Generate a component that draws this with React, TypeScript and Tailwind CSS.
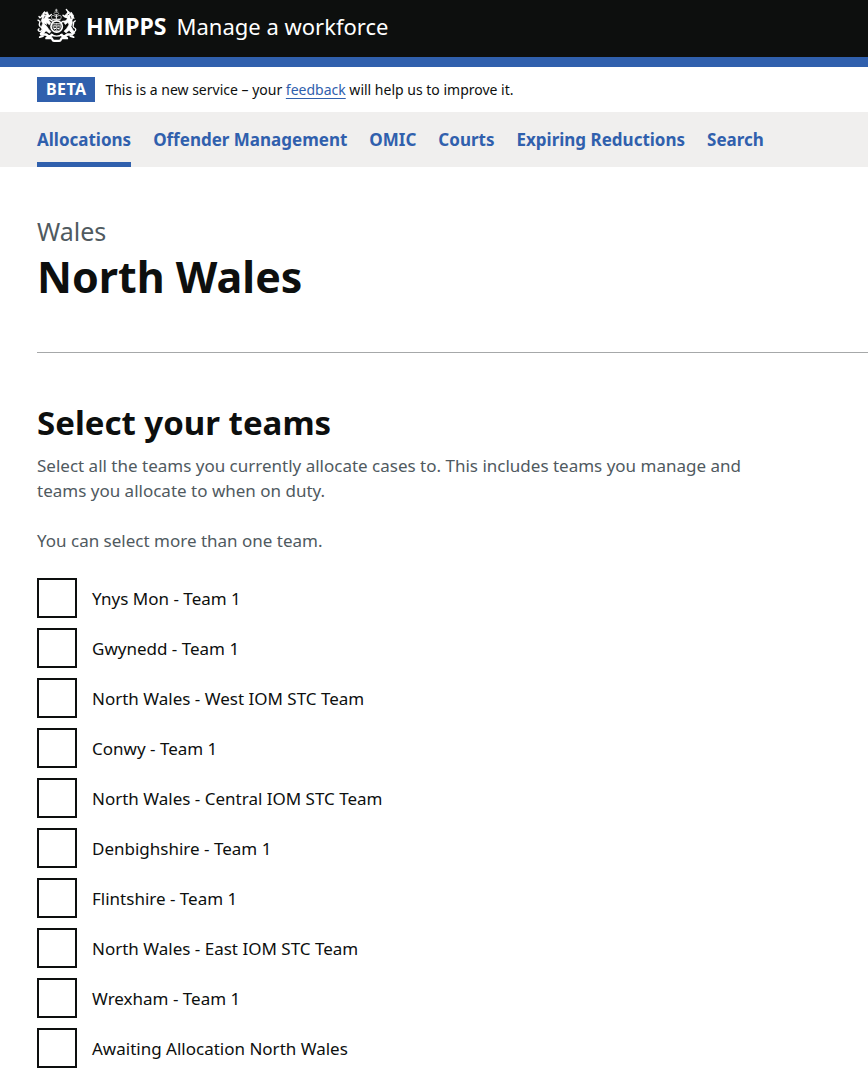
const navItems = ['Allocations', 'Offender Management', 'OMIC', 'Courts', 'Expiring Reductions', 'Search'];

const teams = [
  'Ynys Mon - Team 1',
  'Gwynedd - Team 1',
  'North Wales - West IOM STC Team',
  'Conwy - Team 1',
  'North Wales - Central IOM STC Team',
  'Denbighshire - Team 1',
  'Flintshire - Team 1',
  'North Wales - East IOM STC Team',
  'Wrexham - Team 1',
  'Awaiting Allocation North Wales',
];

function Crest() {
  return (
    <svg viewBox="0 0 120 104" className="h-[35px] w-10 shrink-0" fill="none" stroke="#fff" strokeLinecap="round" strokeLinejoin="round" aria-hidden="true">
      {/* crown and crowned lion */}
      <path d="M58 3v7M55 6h6M53 12h10M51 16l3 4h8l3-4" strokeWidth="2" />
      <path d="M45 32c-4-7-1-11 5-10l8 4 8-4c6-1 9 3 5 10z" strokeWidth="2" />
      <path d="M58 20v11M47 35h22" strokeWidth="3" />
      {/* shield and garter */}
      <circle cx="59" cy="55" r="17" strokeWidth="5" />
      <path d="M48 46h22v10c0 7-5 10-11 13-6-3-11-6-11-13zM59 46v22M48 56h22" strokeWidth="2" />
      <path d="M51 51h5M62 51h5M52 61h4M62 61h4" strokeWidth="3" />
      {/* lion */}
      <path d="M18 15l4-5 4 3 5-2 3 7 5 5-3 4-5-1 5 11 5 7-4 6-8-7-1 10 7 10 7 7-5 5-10-7-9 10-8-1 7-11-4-9 4-11-4-8 3-9-3-4z" fill="#fff" strokeWidth="2" />
      <path d="M24 28l13-4 6-5M25 34l14 0 7 5M20 68l-10 9M9 55c9 4 9 11 1 15-8-1-8-6-4-8M9 54c-6-6 0-9 0-14l-6-4M14 25l-5 4-3-4" strokeWidth="4" />
      <path d="M23 18l4 1M24 24l-3 6M24 48l5 4" stroke="#0b0c0c" strokeWidth="2" />
      {/* unicorn */}
      <path d="M99 16l4-4 3 5 4 6-2 7-3 6 1 9-4 10 5 9 7 11-7 2-10-11-10 8-6-5 8-8 6-10-2-9-8 7-4-6 8-8 4-10-8 2-3-4 6-5 5-7 5 1z" fill="#fff" strokeWidth="2" />
      <path d="M95 13L88 4M94 29l-11-3-5-5M91 39l-14 1-5 4M99 68l10 9M110 72c8-4 9-10 0-14-6-6 3-9-1-15l6-5M105 25l6 5" strokeWidth="4" />
      <path d="M96 18l-3 2M100 24l2 7M94 48l-4 6" stroke="#0b0c0c" strokeWidth="2" />
      {/* motto ribbon */}
      <path d="M13 79l14 0 9 7 9-5M105 79l-14 0-9 7-9-5" strokeWidth="8" />
      <path d="M8 87l10-3M110 87l-10-3" strokeWidth="5" />
      <path d="M28 90h15c4 0 2 8 8 8h16c6 0 4-8 8-8h15" strokeWidth="7" />
      <path d="M43 78c9 8 23 8 32 0" strokeWidth="4" />
    </svg>
  );
}

export default function App() {
  return (
    <div className="overflow-x-hidden bg-white pb-3 font-['Noto_Sans','Open_Sans',sans-serif] text-[#0d0f0e]">
      <header className="border-b-10 border-[#3060ad] bg-[#0d0f0e] px-[37px]">
        <a href="#" className="flex h-[57px] items-center pb-[6px] text-white">
          <Crest />
          <span className="ml-[9px] text-[23px] leading-7 font-bold">HMPPS</span>
          <span className="ml-[10px] text-[22px] leading-7">Manage a workforce</span>
        </a>
      </header>

      <div className="flex h-[45px] items-center px-[37px] text-sm">
        <strong className="bg-[#3060ad] px-[9px] text-base leading-[25px] font-bold tracking-wide text-white">BETA</strong>
        <p className="ml-[10px]">
          This is a new service – your <a href="#" className="text-[#3060ad] underline underline-offset-3">feedback</a> will help us to improve it.
        </p>
      </div>

      <nav aria-label="Primary" className="bg-[#f0efee] px-[37px]">
        <ul className="flex gap-[22px]">
          {navItems.map((item, i) => (
            <li key={item}>
              <a
                href="#"
                aria-current={i === 0 ? 'page' : undefined}
                className={`block h-[55px] border-b-5 pt-[15px] text-[17px] leading-[26px] font-bold whitespace-nowrap text-[#3060ad] ${i === 0 ? 'border-[#3060ad]' : 'border-transparent'}`}
              >
                {item}
              </a>
            </li>
          ))}
        </ul>
      </nav>

      <main className="pl-[37px]">
        <div className="border-b border-[#a6a8a9] pt-[49px] pb-[50px]">
          <p className="text-[25px] leading-[30px] text-[#505a5f]">Wales</p>
          <h1 className="pt-[6px] text-[43px] leading-[50px] font-bold">North Wales</h1>
        </div>
        <form className="max-w-[740px] pt-[50px]">
          <fieldset aria-describedby="teams-hint">
            <legend className="text-[33px] leading-10 font-bold">Select your teams</legend>
            <div id="teams-hint" className="pt-[10px] text-[17px] leading-[25px] text-[#505a5f]">
              <p>Select all the teams you currently allocate cases to. This includes teams you manage and teams you allocate to when on duty.</p>
              <p className="mt-[25px]">You can select more than one team.</p>
            </div>
            <div className="mt-[25px] flex flex-col gap-[10px]">
              {teams.map((team, i) => (
                <div key={team} className="flex items-center">
                  <input id={`team-${i}`} type="checkbox" className="size-10 shrink-0 appearance-none border-2 border-[#0d0f0e] bg-white checked:bg-[#0d0f0e]" />
                  <label htmlFor={`team-${i}`} className="pl-[15px] text-[17px] leading-[25px]">{team}</label>
                </div>
              ))}
            </div>
          </fieldset>
        </form>
      </main>
    </div>
  );
}
